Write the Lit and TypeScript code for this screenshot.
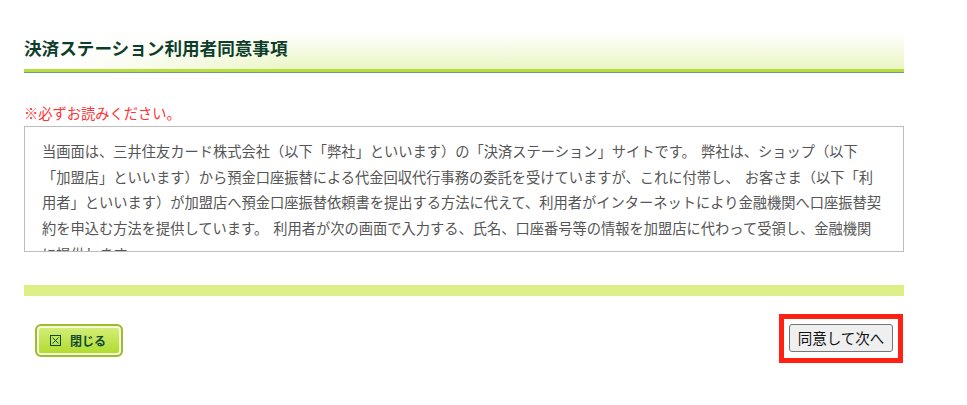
import { LitElement, html, css } from "lit";
import { customElement } from "lit/decorators.js";

@customElement("app-root")
export class AppRoot extends LitElement {
  static styles = css`
    :host {
      display: block;
      box-sizing: border-box;
      width: 967px;
      height: 405px;
      padding: 30px 63px 0 24px;
      background: #fff;
      font-family: "Noto Sans CJK JP", "Liberation Sans", sans-serif;
      overflow: hidden;
    }
    .title {
      height: 39px;
      box-sizing: border-box;
      margin: 0;
      padding-top: 5px;
      font-size: 17.6px;
      line-height: 26px;
      font-weight: 700;
      color: #0f3d2c;
      background:
        linear-gradient(to right, #fff 5%, rgba(255, 255, 255, 0) 30%),
        linear-gradient(to bottom, #fff 5%, #e9f6c4 100%);
    }
    .rule {
      height: 3px;
      background: #b9dd3c;
      border-bottom: 1px solid #6b9a8a;
    }
    .notice {
      margin: 28px 0 0;
      font-size: 14.25px;
      line-height: 24px;
      color: #ff3333;
    }
    .terms {
      box-sizing: border-box;
      height: 126px;
      margin-top: 1px;
      padding: 11px 19px 0 17px;
      border: 1px solid #bdbdbd;
      font-size: 14.25px;
      line-height: 25.65px;
      word-spacing: 2px;
      color: #555;
      overflow: hidden;
    }
    .terms p { margin: 0; }
    .band {
      height: 11px;
      margin-top: 33px;
      background: #dcf087;
    }
    .actions {
      display: flex;
      justify-content: space-between;
      align-items: flex-start;
      margin-top: 18px;
    }
    .close {
      display: flex;
      align-items: center;
      justify-content: center;
      gap: 9px;
      box-sizing: border-box;
      width: 88px;
      height: 33px;
      margin: 10px 0 0 11px;
      padding-right: 2px;
      border: 2px solid #9dbb2a;
      border-radius: 6px;
      box-shadow: inset 0 0 0 2px #f4fadc;
      background: linear-gradient(to bottom, #d6ee7c, #aedb2c);
      color: #0f4a30;
      font-size: 12px;
      font-weight: 700;
      text-decoration: none;
    }
    .close svg { display: block; }
    .highlight {
      box-sizing: border-box;
      width: 124px;
      height: 49px;
      margin-right: 1px;
      padding: 5px;
      border: 5px solid #ff2112;
    }
    .next {
      display: block;
      box-sizing: border-box;
      width: 104px;
      height: 28px;
      padding: 0;
      border: 1px solid #767676;
      border-radius: 3px;
      background: #efefef;
      color: #111;
      font-family: inherit;
      font-size: 14.5px;
      line-height: 26px;
    }
  `;

  render() {
    return html`
      <h1 class="title">決済ステーション利用者同意事項</h1>
      <div class="rule"></div>
      <p class="notice">※必ずお読みください。</p>
      <div class="terms">
        <p>当画面は、三井住友カード株式会社（以下「弊社」といいます）の「決済ステーション」サイトです。 弊社は、ショップ（以下「加盟店」といいます）から預金口座振替による代金回収代行事務の委託を受けていますが、これに付帯し、 お客さま（以下「利用者」といいます）が加盟店へ預金口座振替依頼書を提出する方法に代えて、利用者がインターネットにより金融機関へ口座振替契約を申込む方法を提供しています。 利用者が次の画面で入力する、氏名、口座番号等の情報を加盟店に代わって受領し、金融機関に提供します。</p>
      </div>
      <div class="band"></div>
      <div class="actions">
        <a class="close" href="#">
          <svg width="11" height="11" viewBox="0 0 11 11" fill="none" stroke="#0f4a30" stroke-width="1">
            <rect x="0.5" y="0.5" width="10" height="10"></rect>
            <path d="M2.5 2.5l6 6M8.5 2.5l-6 6"></path>
          </svg>
          <span>閉じる</span>
        </a>
        <div class="highlight"><button class="next">同意して次へ</button></div>
      </div>
    `;
  }
}
